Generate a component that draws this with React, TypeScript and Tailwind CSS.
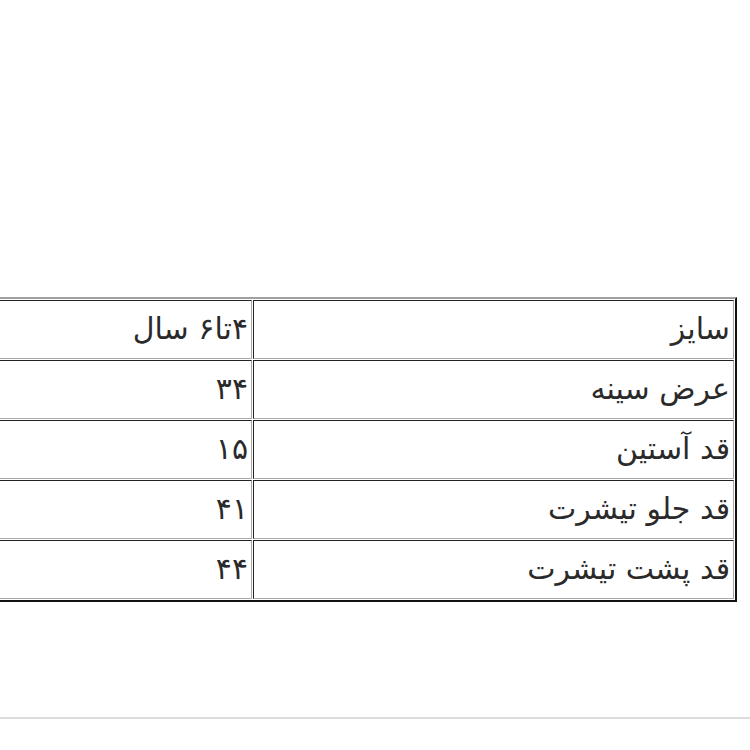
import React from "react";

const rows = [
  ["سایز", "۴تا۶ سال"],
  ["عرض سینه", "۳۴"],
  ["قد آستین", "۱۵"],
  ["قد جلو تیشرت", "۴۱"],
  ["قد پشت تیشرت", "۴۴"],
];

const cell =
  "h-[59px] border-[1.5px] border-t-[#222] border-l-[#222] border-b-[#a8a8a8] border-r-[#a8a8a8] px-[3px] pb-[2px] text-right align-middle leading-none";

export default function App() {
  return (
    <div className="w-[750px] h-[750px] bg-white overflow-hidden flex flex-col font-['DejaVu_Sans',sans-serif] text-[#2a2a2a]">
      <div dir="rtl" className="pt-[297px] pr-[13px]">
        <table className="w-[770px] border-separate border-spacing-[1.5px] border-2 border-t-[#a0a0a0] border-b-[#111] [border-right-color:#111] [border-left-color:#a0a0a0]">
          <tbody>
            {rows.map(([label, value], i) => (
              <tr key={i}>
                <td className={`${cell} w-[481px] text-[30px]`}>{label}</td>
                <td className={`${cell} text-[30px]`}>{value}</td>
              </tr>
            ))}
          </tbody>
        </table>
      </div>
      <div className="mt-[115px] h-[2px] bg-[#dcdcdc]" />
    </div>
  );
}
